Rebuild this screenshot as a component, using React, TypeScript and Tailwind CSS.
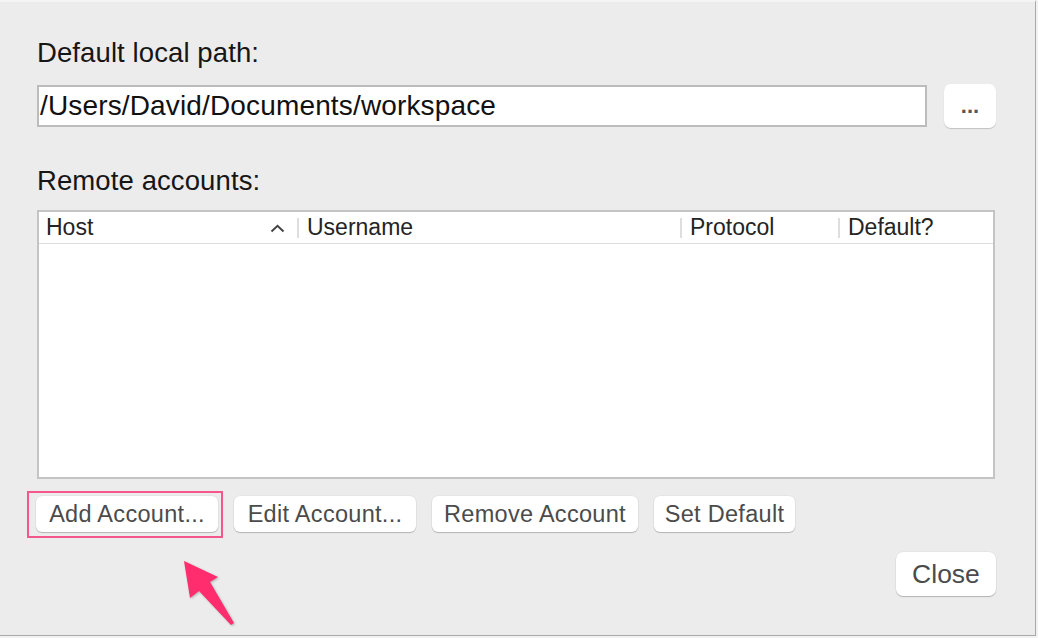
import React from 'react';

const font = { fontFamily: '"Liberation Sans", Arial, Helvetica, sans-serif' };

interface MacButtonProps {
  label: string;
  width: string;
  className?: string;
}

const MacButton: React.FC<MacButtonProps> = ({ label, width, className }) => (
  <button
    className={`${width} h-[36px] rounded-[6px] bg-white text-[23.5px] leading-[36px] tracking-[0.3px] text-[#4b4b4b] shadow-[0_1px_1px_rgba(0,0,0,0.22),0_0_0_0.5px_rgba(0,0,0,0.06)] ${className ?? ''}`}
  >
    {label}
  </button>
);

const ColumnHead: React.FC<{ label: string; width?: string }> = ({ label, width }) => (
  <div className={`flex h-full items-center ${width ?? 'flex-1'}`}>
    <div className="h-[20px] w-[2px] bg-[#dedede]" />
    <span className="ml-[8px]">{label}</span>
  </div>
);

export default function App() {
  return (
    <div className="h-[638px] w-[1038px] bg-[#f2f2f2]" style={font}>
      <div className="relative flex h-[636px] w-[1036px] flex-col border-t-2 border-r border-b border-t-[#f4f4f4] border-r-[#a9a9a9] border-b-[#a9a9a9] bg-[#ececec] pl-[37px] pr-[39px] pt-[35px]">
        {/* local path */}
        <div className="text-[27.5px] leading-[32px] tracking-[0.1px] text-[#161616]">Default local path:</div>
        <div className="mt-[15px] flex h-[44px] items-center gap-[17px]">
          <div className="flex h-[42px] w-[890px] items-center border-2 border-[#bcbcbc] bg-white pl-[1px] text-[28px] leading-[32px] tracking-[0.15px] text-[#111]">
            /Users/David/Documents/workspace
          </div>
          <button className="h-[44px] w-[52px] rounded-[7px] bg-white text-[22px] font-bold leading-[44px] text-[#555] shadow-[0_1px_1px_rgba(0,0,0,0.18)]">
            ...
          </button>
        </div>

        {/* remote accounts */}
        <div className="mt-[37px] text-[27.5px] leading-[32px] tracking-[0.1px] text-[#161616]">Remote accounts:</div>
        <div className="mt-[13px] flex h-[269px] w-[958px] flex-col border-2 border-[#c4c4c4] bg-white">
          <div className="flex h-[32px] border-b border-[#dcdcdc] text-[23px] leading-[31px] text-[#242424]">
            <div className="flex w-[258px] items-center justify-between pl-[7px] pr-[12px]">
              <span>Host</span>
              <svg width="15" height="9" viewBox="0 0 15 9" className="mt-[1px]">
                <polyline points="1.5,7.5 7.5,1.8 13.5,7.5" fill="none" stroke="#444" strokeWidth="2" />
              </svg>
            </div>
            <ColumnHead label="Username" width="w-[383px]" />
            <ColumnHead label="Protocol" width="w-[158px]" />
            <ColumnHead label="Default?" />
          </div>
          <div className="flex-1" />
        </div>

        {/* account buttons */}
        <div className="mt-[17px] flex gap-[16px] -ml-[1px]">
          <div className="relative">
            <MacButton label="Add Account..." width="w-[182px]" />
            <div className="pointer-events-none absolute -left-[9px] -right-[5px] -top-[5px] -bottom-[6px] border-2 border-[#f4578b]" />
          </div>
          <MacButton label="Edit Account..." width="w-[182px]" />
          <MacButton label="Remove Account" width="w-[206px]" />
          <MacButton label="Set Default" width="w-[141px]" />
        </div>

        <div className="mt-[20px] flex justify-end">
          <button className="h-[44px] w-[100px] rounded-[7px] bg-white text-[26.5px] leading-[44px] text-[#4b4b4b] shadow-[0_1px_1px_rgba(0,0,0,0.22),0_0_0_0.5px_rgba(0,0,0,0.06)]">
            Close
          </button>
        </div>

        {/* annotation arrow */}
        <svg
          width="70"
          height="80"
          viewBox="0 0 70 80"
          className="absolute left-[175px] top-[550px] drop-shadow-[1px_1px_1px_rgba(0,0,0,0.25)]"
        >
          <path d="M9 9 L43 25 L35 30 L59 71 L56 73 L24 39 L15 46 Z" fill="#ff2d6d" />
        </svg>
      </div>
    </div>
  );
}
